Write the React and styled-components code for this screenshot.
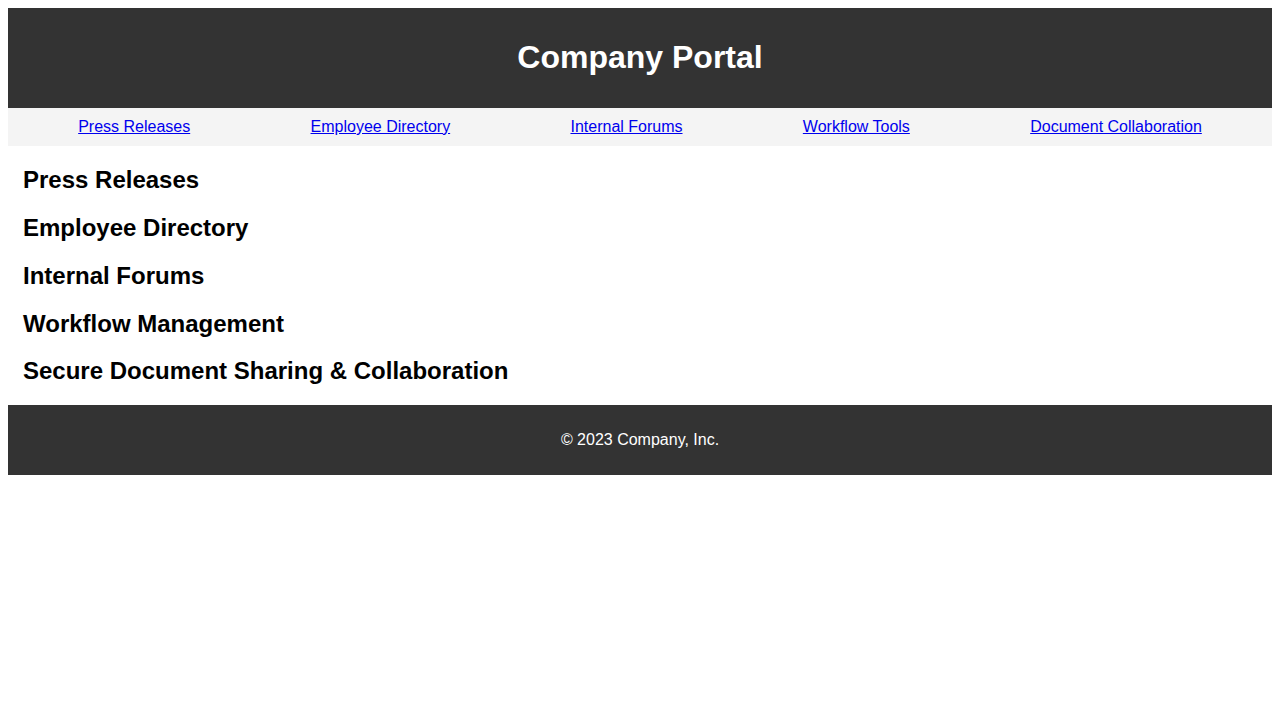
import React from "react";
import styled, { createGlobalStyle } from "styled-components";

const GlobalStyle = createGlobalStyle`
  body {
    margin: 8px;
    font-family: "Liberation Sans", Arial, sans-serif;
    background: #ffffff;
    color: #000000;
  }
`;

const Header = styled.header`
  background: #333333;
  color: #ffffff;
  padding: 10px;
  text-align: center;

  h1 {
    font-size: 32px;
    margin: 0.67em 0;
  }
`;

const Nav = styled.nav`
  background: #f4f4f4;
  padding: 10px;

  ul {
    list-style: none;
    margin: 0;
    padding: 0;
    display: flex;
    justify-content: space-around;
  }

  a {
    color: #0000ee;
    font-size: 16px;
    text-decoration: underline;
  }
`;

const Main = styled.main`
  padding: 0 15px;
`;

const Section = styled.section`
  h2 {
    font-size: 24px;
    font-weight: 700;
    margin: 0.83em 0;
  }
`;

const Footer = styled.footer`
  background: #333333;
  color: #ffffff;
  padding: 10px;
  text-align: center;

  p {
    margin: 16px 0;
    font-size: 16px;
  }
`;

const links = [
  { href: "#press", label: "Press Releases" },
  { href: "#directory", label: "Employee Directory" },
  { href: "#forums", label: "Internal Forums" },
  { href: "#workflow", label: "Workflow Tools" },
  { href: "#documents", label: "Document Collaboration" },
];

const sections = [
  { id: "press", title: "Press Releases" },
  { id: "directory", title: "Employee Directory" },
  { id: "forums", title: "Internal Forums" },
  { id: "workflow", title: "Workflow Management" },
  { id: "documents", title: "Secure Document Sharing & Collaboration" },
];

const App = () => {
  return (
    <>
      <GlobalStyle />
      <Header>
        <h1>Company Portal</h1>
      </Header>
      <Nav>
        <ul>
          {links.map((l) => (
            <li key={l.href}>
              <a href={l.href}>{l.label}</a>
            </li>
          ))}
        </ul>
      </Nav>
      <Main>
        {sections.map((s) => (
          <Section key={s.id} id={s.id}>
            <h2>{s.title}</h2>
          </Section>
        ))}
      </Main>
      <Footer>
        <p>&copy; 2023 Company, Inc.</p>
      </Footer>
    </>
  );
};

export default App;
